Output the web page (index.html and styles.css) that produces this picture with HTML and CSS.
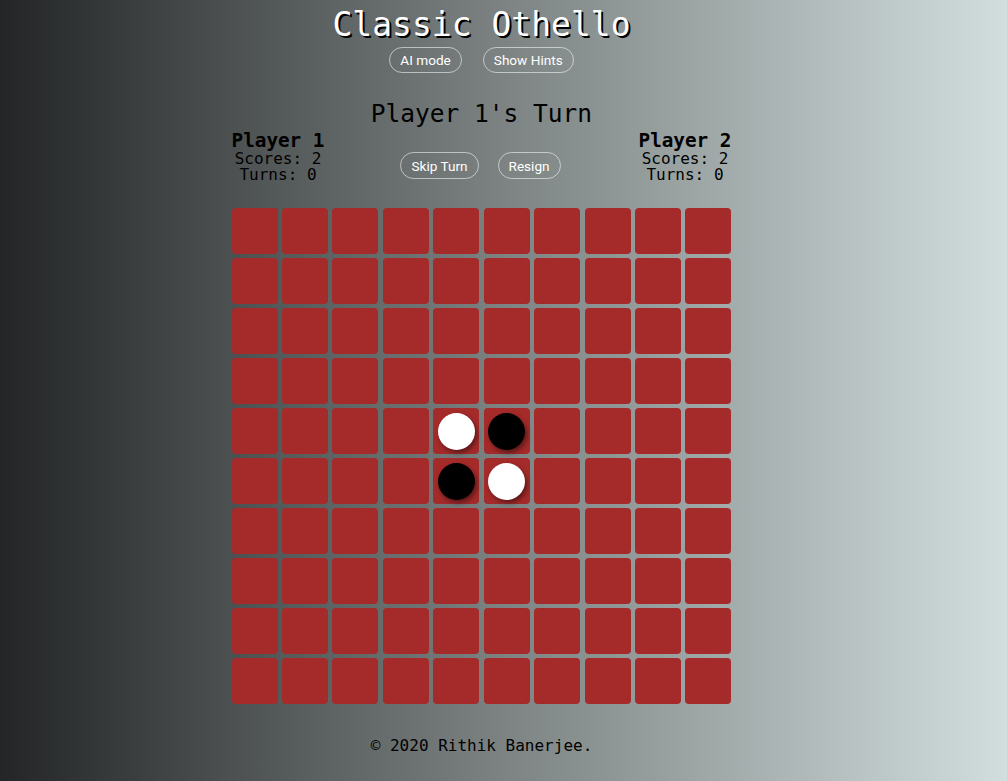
FILE: index.html
```html
<!DOCTYPE html>
<html>
<head>
<meta charset="utf-8">
<link rel="stylesheet" href="styles.css">
</head>
<body>
<div class="page">
  <header class="top">
    <h1 class="title">Classic Othello</h1>
    <div class="btn-row top-btns">
      <button class="btn">AI mode</button>
      <button class="btn">Show Hints</button>
    </div>
  </header>
  <h2 class="turn">Player 1's Turn</h2>
  <div class="players">
    <div class="player">
      <div class="pname">Player 1</div>
      <div class="pstat">Scores: 2</div>
      <div class="pstat">Turns: 0</div>
    </div>
    <div class="btn-row mid-btns">
      <button class="btn">Skip Turn</button>
      <button class="btn">Resign</button>
    </div>
    <div class="player">
      <div class="pname">Player 2</div>
      <div class="pstat">Scores: 2</div>
      <div class="pstat">Turns: 0</div>
    </div>
  </div>
  <div class="board" id="board"></div>
  <footer class="footer">© 2020 Rithik Banerjee.</footer>
</div>
<script src="script.js"></script>
</body>
</html>
```

FILE: script.js
```js
const board = document.getElementById('board');
for (let r = 0; r < 10; r++) {
  for (let c = 0; c < 10; c++) {
    const cell = document.createElement('div');
    cell.className = 'cell';
    let disc = null;
    if ((r === 4 && c === 4) || (r === 5 && c === 5)) disc = 'white';
    if ((r === 4 && c === 5) || (r === 5 && c === 4)) disc = 'black';
    if (disc) {
      const d = document.createElement('div');
      d.className = 'disc ' + disc;
      cell.appendChild(d);
    }
    board.appendChild(cell);
  }
}
```

FILE: styles.css
```css
html, body {
  margin: 0;
  padding: 0;
  height: 100%;
}
body {
  background: linear-gradient(to right, #232526 0%, #7c8382 50%, #d2dede 100%);
  font-family: "DejaVu Sans Mono", monospace;
  color: #000;
}
.page {
  width: 500px;
  margin: 0 auto;
  padding-right: 44px;
  padding-top: 6px;
  display: flex;
  flex-direction: column;
  align-items: stretch;
}
.top {
  display: flex;
  flex-direction: column;
  align-items: center;
}
.title {
  margin: 0;
  font-size: 33px;
  font-weight: normal;
  line-height: 38px;
  color: #fff;
  text-shadow: 2px 2px 0 #000;
  letter-spacing: 0;
}
.btn-row {
  display: flex;
  gap: 21px;
  justify-content: center;
}
.top-btns {
  margin-top: 3px;
}
.btn {
  font-family: Roboto, "Liberation Sans", sans-serif;
  font-size: 13.6px;
  line-height: 16px;
  color: #fff;
  background: transparent;
  border: 1px solid rgba(255, 255, 255, 0.55);
  border-radius: 14px;
  padding: 4px 10px;
  cursor: pointer;
}
.turn {
  margin: 26px 0 0;
  text-align: center;
  font-size: 24.5px;
  font-weight: normal;
  line-height: 30px;
}
.players {
  display: flex;
  justify-content: space-between;
  align-items: flex-start;
  margin-top: 2px;
}
.player {
  display: flex;
  flex-direction: column;
  align-items: center;
  width: 93px;
}
.pname {
  font-size: 19.3px;
  font-weight: bold;
  line-height: 20px;
}
.pstat {
  font-size: 16px;
  line-height: 16px;
}
.mid-btns {
  gap: 19px;
  margin-top: 21px;
  padding-right: 2px;
}
.mid-btns .btn {
  padding: 5px 10px 4px;
}
.board {
  margin-top: 25px;
  display: grid;
  grid-template-columns: repeat(10, 1fr);
  column-gap: 4.44px;
  row-gap: 4px;
  width: 500px;
}
.cell {
  height: 46px;
  background: #a52a2a;
  border-radius: 4px;
  display: flex;
  align-items: center;
  justify-content: center;
}
.disc {
  width: 37px;
  height: 37px;
  border-radius: 50%;
  box-shadow: 2px 3px 5px rgba(0, 0, 0, 0.45);
}
.disc.white { background: #fff; }
.disc.black { background: #000; }
.footer {
  margin-top: 33px;
  text-align: center;
  font-size: 16px;
  line-height: 18px;
}
```
